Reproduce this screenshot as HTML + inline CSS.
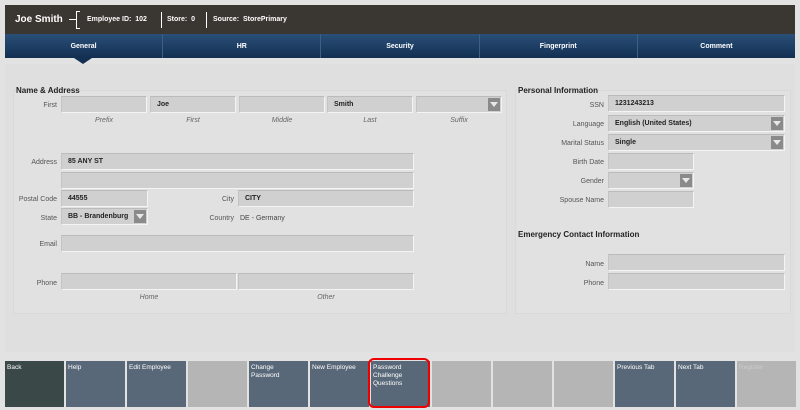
<!DOCTYPE html>
<html><head><style>
*{margin:0;padding:0;box-sizing:border-box}
body{width:800px;height:410px;background:#e2e2e2;font-family:"Liberation Sans",sans-serif;position:relative;overflow:hidden;font-size:7px;color:#222}
.a{position:absolute}
.top{left:5px;top:5px;width:790px;height:29px;background:#3a3632;color:#fff}
.tabs{left:5px;top:34px;width:790px;height:24px;background:linear-gradient(#2a4f78,#132f52);display:flex}
.tab{flex:1;color:#fff;font-weight:bold;text-align:center;line-height:26px;font-size:7px;border-left:1px solid #3c5f86}
.tab:first-child{border-left:none}
.f{position:absolute;height:17px;background:#d0d0d0;border-top:1px solid #bbb;border-left:1px solid #c4c4c4;border-bottom:1px solid #f4f4f4;border-right:1px solid #f4f4f4;font-weight:bold;font-size:7px;line-height:15px;padding-left:6px}
.dd{position:absolute;right:1px;top:1px;width:12px;height:13px;background:#8a8a8a}
.dd:after{content:"";position:absolute;left:2px;top:4px;border-left:4px solid transparent;border-right:4px solid transparent;border-top:5px solid #e8e8e8}
.l{position:absolute;color:#555;font-size:7px;text-align:right;margin-top:2px}
.s{position:absolute;color:#666;font-style:italic;font-size:7px;text-align:center}
.h{position:absolute;font-weight:bold;font-size:8px;color:#222}
.b{position:absolute;top:361px;width:59px;height:46px;background:#596878;color:#fff;font-size:6.5px;padding:3px 2px;line-height:8px}
.g{background:#b5b5b5}
</style></head><body>
<div class="a top">
<div class="a" style="left:10px;top:9px;font-size:10px;font-weight:bold">Joe Smith</div>
<div class="a" style="left:64px;top:14px;width:7px;height:1px;background:#fff"></div>
<div class="a" style="left:71px;top:6px;width:4px;height:18px;border:1px solid #fff;border-right:none"></div>
<div class="a" style="left:82px;top:11px;font-size:7px;font-weight:bold">Employee ID:&nbsp; 102</div>
<div class="a" style="left:156px;top:7px;width:1px;height:16px;background:#fff"></div>
<div class="a" style="left:162px;top:11px;font-size:7px;font-weight:bold">Store:&nbsp; 0</div>
<div class="a" style="left:201px;top:7px;width:1px;height:16px;background:#fff"></div>
<div class="a" style="left:208px;top:11px;font-size:7px;font-weight:bold">Source:&nbsp; StorePrimary</div>
</div>
<div class="a tabs"><div class="tab">General</div><div class="tab">HR</div><div class="tab">Security</div><div class="tab">Fingerprint</div><div class="tab">Comment</div></div>
<div class="a" style="left:74px;top:58px;border-left:9px solid transparent;border-right:9px solid transparent;border-top:6px solid #132f52"></div>
<div class="a" style="left:5px;top:64px;width:790px;height:288px;background:#dfdfdf"></div>
<div class="a" style="left:13px;top:90px;width:494px;height:224px;background:#e1e1e1;border:1px solid #d9d9d9"></div>
<div class="a" style="left:515px;top:90px;width:276px;height:224px;background:#e1e1e1;border:1px solid #d9d9d9"></div>
<div class="h" style="left:16px;top:86px">Name &amp; Address</div>
<div class="l" style="left:20px;top:100px;width:37px">First</div>
<div class="f" style="left:61px;top:96px;width:86px"></div>
<div class="f" style="left:150px;top:96px;width:86px">Joe</div>
<div class="f" style="left:239px;top:96px;width:86px"></div>
<div class="f" style="left:327px;top:96px;width:86px">Smith</div>
<div class="f" style="left:416px;top:96px;width:86px"><div class="dd"></div></div>
<div class="s" style="left:61px;top:117px;width:86px">Prefix</div>
<div class="s" style="left:150px;top:117px;width:86px">First</div>
<div class="s" style="left:239px;top:117px;width:86px">Middle</div>
<div class="s" style="left:327px;top:117px;width:86px">Last</div>
<div class="s" style="left:416px;top:117px;width:86px">Suffix</div>
<div class="l" style="left:10px;top:157px;width:47px">Address</div>
<div class="f" style="left:61px;top:153px;width:353px">85 ANY ST</div>
<div class="f" style="left:61px;top:172px;width:353px"></div>
<div class="l" style="left:5px;top:194px;width:52px">Postal Code</div>
<div class="f" style="left:61px;top:190px;width:87px">44555</div>
<div class="l" style="left:190px;top:194px;width:44px">City</div>
<div class="f" style="left:238px;top:190px;width:176px">CITY</div>
<div class="l" style="left:10px;top:213px;width:47px">State</div>
<div class="f" style="left:61px;top:208px;width:87px">BB - Brandenburg<div class="dd"></div></div>
<div class="l" style="left:190px;top:213px;width:44px">Country</div>
<div class="a" style="left:240px;top:215px;color:#444">DE - Germany</div>
<div class="l" style="left:10px;top:239px;width:47px">Email</div>
<div class="f" style="left:61px;top:235px;width:353px"></div>
<div class="l" style="left:10px;top:278px;width:47px">Phone</div>
<div class="f" style="left:61px;top:273px;width:176px"></div>
<div class="f" style="left:238px;top:273px;width:176px"></div>
<div class="s" style="left:61px;top:294px;width:176px">Home</div>
<div class="s" style="left:238px;top:294px;width:176px">Other</div>
<div class="h" style="left:518px;top:86px">Personal Information</div>
<div class="l" style="left:520px;top:100px;width:84px">SSN</div>
<div class="f" style="left:608px;top:95px;width:177px">1231243213</div>
<div class="l" style="left:520px;top:119px;width:84px">Language</div>
<div class="f" style="left:608px;top:115px;width:177px">English (United States)<div class="dd"></div></div>
<div class="l" style="left:520px;top:138px;width:84px">Marital Status</div>
<div class="f" style="left:608px;top:134px;width:177px">Single<div class="dd"></div></div>
<div class="l" style="left:520px;top:157px;width:84px">Birth Date</div>
<div class="f" style="left:608px;top:153px;width:86px"></div>
<div class="l" style="left:520px;top:176px;width:84px">Gender</div>
<div class="f" style="left:608px;top:172px;width:86px"><div class="dd"></div></div>
<div class="l" style="left:520px;top:195px;width:84px">Spouse Name</div>
<div class="f" style="left:608px;top:191px;width:86px"></div>
<div class="h" style="left:518px;top:230px">Emergency Contact Information</div>
<div class="l" style="left:520px;top:259px;width:84px">Name</div>
<div class="f" style="left:608px;top:254px;width:177px"></div>
<div class="l" style="left:520px;top:278px;width:84px">Phone</div>
<div class="f" style="left:608px;top:273px;width:177px"></div>
<div class="b" style="left:5px;background:#3b4848">Back</div>
<div class="b" style="left:66px">Help</div>
<div class="b" style="left:127px">Edit Employee</div>
<div class="b g" style="left:188px"></div>
<div class="b" style="left:249px">Change<br>Password</div>
<div class="b" style="left:310px">New Employee</div>
<div class="b" style="left:371px">Password<br>Challenge<br>Questions</div>
<div class="b g" style="left:432px"></div>
<div class="b g" style="left:493px"></div>
<div class="b g" style="left:554px"></div>
<div class="b" style="left:615px">Previous Tab</div>
<div class="b" style="left:676px">Next Tab</div>
<div class="b g" style="left:737px;color:#ccc">Register</div>
<div class="a" style="left:368px;top:358px;width:62px;height:50px;border:2px solid #e00;border-radius:6px"></div>
</body></html>
